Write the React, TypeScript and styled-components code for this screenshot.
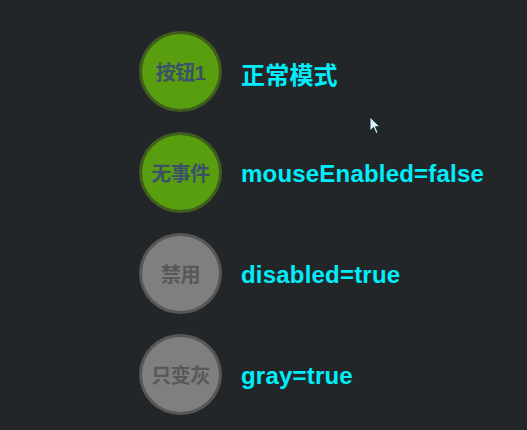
import styled, { createGlobalStyle } from "styled-components";

const GlobalStyle = createGlobalStyle`
  html, body {
    margin: 0;
    padding: 0;
    background: #222629;
  }
  body {
    font-family: "Liberation Sans", "Noto Sans CJK SC", sans-serif;
  }
`;

type Variant = "green" | "gray";

const buttons: { label: string; text: string; variant: Variant }[] = [
  { label: "按钮1", text: "正常模式", variant: "green" },
  { label: "无事件", text: "mouseEnabled=false", variant: "green" },
  { label: "禁用", text: "disabled=true", variant: "gray" },
  { label: "只变灰", text: "gray=true", variant: "gray" },
];

const App = () => {
  return (
    <>
      <GlobalStyle />
      <Page>
        <List>
          {buttons.map((b) => (
            <Row key={b.label}>
              <Circle $variant={b.variant}>{b.label}</Circle>
              <Caption>{b.text}</Caption>
            </Row>
          ))}
        </List>
        <Cursor width="14" height="20" viewBox="0 0 14 20">
          <path
            d="M1 1 L1 15 L4.5 11.5 L7 17.5 L9 16.5 L6.5 10.8 L11 10.8 Z"
            fill="#d8f4fb"
            stroke="#1a2a30"
            strokeWidth="1"
          />
        </Cursor>
      </Page>
    </>
  );
};

const Page = styled.div`
  position: relative;
  width: 527px;
  height: 430px;
  background: #222629;
  overflow: hidden;
`;

const List = styled.div`
  display: flex;
  flex-direction: column;
  gap: 20px;
  padding: 31px 0 0 139px;
`;

const Row = styled.div`
  display: flex;
  align-items: center;
  gap: 19px;
  height: 81px;
`;

const Circle = styled.div<{ $variant: Variant }>`
  box-sizing: border-box;
  width: 83px;
  height: 81px;
  border-radius: 50%;
  display: flex;
  align-items: center;
  justify-content: center;
  font-size: 20px;
  font-weight: bold;
  letter-spacing: -0.5px;
  background: ${(p) => (p.$variant === "green" ? "#589e0e" : "#7f7f7f")};
  border: 3px solid ${(p) => (p.$variant === "green" ? "#3f5d1c" : "#575757")};
  color: ${(p) => (p.$variant === "green" ? "#3d5068" : "#585858")};
`;

const Caption = styled.div`
  color: #00eefa;
  font-size: 24px;
  font-weight: bold;
  margin-top: 3px;
  letter-spacing: 0.2px;
`;

const Cursor = styled.svg`
  position: absolute;
  left: 369px;
  top: 116px;
`;

export default App;
